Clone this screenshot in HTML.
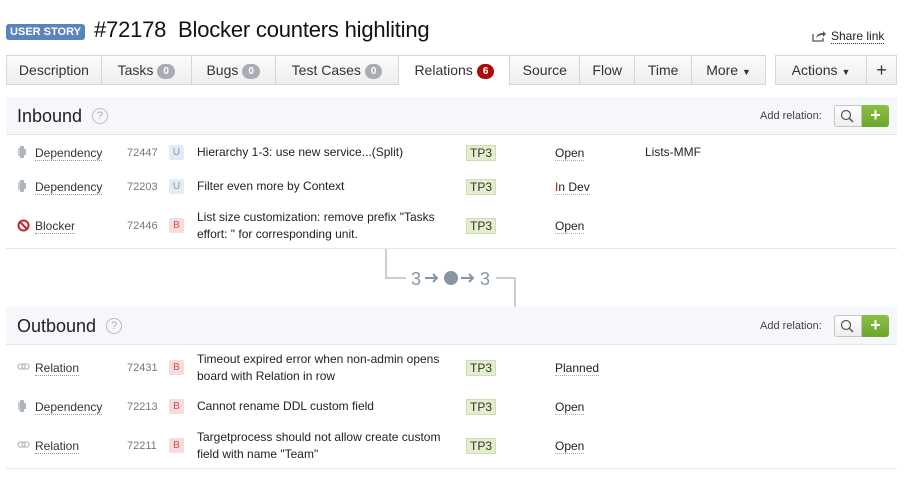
<!DOCTYPE html>
<html><head><meta charset="utf-8"><style>
*{box-sizing:border-box;margin:0;padding:0}
body{width:905px;height:487px;background:#fff;font-family:"Liberation Sans",sans-serif;color:#222;position:relative;overflow:hidden}
.a{position:absolute;white-space:nowrap}
.us{left:6px;top:24px;width:79px;height:16px;background:#5b84bd;border-radius:3px;color:#fff;font-size:11px;font-weight:bold;text-align:center;line-height:16px}
.title{left:94px;top:17px;font-size:22px;color:#111;letter-spacing:-0.2px}
.share{left:831px;top:30px;font-size:12px;color:#222;border-bottom:1px dotted #333;line-height:13px}
.tabs{left:6px;top:55px;height:30px;width:760px;border:1px solid #d6d6d6;background:linear-gradient(#fbfbfb,#eeeeee);display:flex}
.tab{height:28px;border-right:1px solid #d6d6d6;font-size:14px;color:#333;line-height:28px;text-align:center}
.tab.act{background:#fff;height:30px}
.cnt{display:inline-block;background:#a7adb5;color:#fff;border-radius:9px;font-size:10px;font-weight:bold;padding:0 6px;line-height:15px;vertical-align:1px;margin-left:4px}
.cnt.r{background:#a80d0d}
.btn{top:55px;height:30px;border:1px solid #d6d6d6;background:linear-gradient(#fbfbfb,#eeeeee);font-size:14px;color:#333;line-height:28px;text-align:center}
.panel{left:6px;width:891px;height:38px;background:#f6f7fa;border-bottom:1px solid #e3e5e8}
.ph{left:17px;font-size:18px;color:#222}
.q{display:inline-block;width:16px;height:16px;border:1px solid #bbb;border-radius:50%;color:#aaa;font-size:11px;text-align:center;line-height:14px;vertical-align:3px;margin-left:10px}
.addr{font-size:11px;color:#444}
.sb{width:28px;height:22px;border:1px solid #c6c6c6;border-radius:3px 0 0 3px;background:linear-gradient(#fff,#eee)}
.pb{width:27px;height:22px;border-radius:0 3px 3px 0;background:linear-gradient(#8cc044,#6ba62e);color:#fff;font-size:18px;font-weight:bold;text-align:center;line-height:21px}
.t{font-size:12px;color:#333;border-bottom:1px dotted #999;line-height:14px}
.id{font-size:11px;color:#777}
.bd{width:15px;height:15px;border-radius:2px;font-size:10px;text-align:center;line-height:15px}
.bu{background:#e5ebf5;color:#7d93c5}.bb{background:#f6dcdc;color:#d05050}
.tx{font-size:12px;color:#222;line-height:17px}
.tp{width:30px;height:16px;background:#e3eecd;border:1px solid #cfdcb5;font-size:12px;color:#333;text-align:center;line-height:14px}
.st{font-size:12px;color:#222;border-bottom:1px dotted #aaa;line-height:14px}
.hl{left:6px;width:891px;height:1px;background:#e3e5e8}
.ln{background:#c9cfd6}
</style></head><body>
<div class="a us">USER STORY</div>
<div class="a title">#72178&nbsp; Blocker counters highliting</div>
<svg class="a" style="left:812px;top:30px" width="14" height="12" viewBox="0 0 14 12"><path d="M1 4v7h10v-3" fill="none" stroke="#555" stroke-width="1.3"/><path d="M4 8c1-4 4-5 7-5V1l3 3-3 3V5c-3 0-5 1-7 3z" fill="#555"/></svg>
<div class="a share">Share link</div>
<div class="a tabs">
<div class="tab" style="width:95px">Description</div>
<div class="tab" style="width:90px">Tasks<span class="cnt">0</span></div>
<div class="tab" style="width:84px">Bugs<span class="cnt">0</span></div>
<div class="tab" style="width:124px">Test Cases<span class="cnt">0</span></div>
<div class="tab act" style="width:111px">Relations<span class="cnt r">6</span></div>
<div class="tab" style="width:70px">Source</div>
<div class="tab" style="width:55px">Flow</div>
<div class="tab" style="width:57px">Time</div>
<div class="tab" style="width:73px;border-right:0">More <span style="font-size:9px">▼</span></div>
</div>
<div class="a btn" style="left:775px;width:92px">Actions <span style="font-size:9px">▼</span></div>
<div class="a btn" style="left:866px;width:31px;font-size:18px">+</div>

<div class="a panel" style="top:97px"></div>
<div class="a ph" style="top:106px">Inbound<span class="q">?</span></div>
<div class="a addr" style="left:760px;top:110px">Add relation:</div>
<div class="a sb" style="left:834px;top:105px"><svg width="26" height="20"><circle cx="11" cy="9" r="4.5" fill="none" stroke="#555" stroke-width="1.2"/><path d="M14 12l4 4" stroke="#555" stroke-width="1.5"/></svg></div>
<div class="a pb" style="left:862px;top:105px">+</div>

<svg class="a" style="left:17px;top:145px" width="10" height="14"><path d="M3 1h4v3h2v6H7v3H3V1z" fill="#b0b6bd"/><path d="M1 3h2v8H1z" fill="#c8cdd2"/></svg>
<div class="a t" style="left:35px;top:146px">Dependency</div>
<div class="a id" style="left:127px;top:147px">72447</div>
<div class="a bd bu" style="left:169px;top:145px">U</div>
<div class="a tx" style="left:197px;top:144px">Hierarchy 1-3: use new service...(Split)</div>
<div class="a tp" style="left:466px;top:145px">TP3</div>
<div class="a st" style="left:555px;top:146px">Open</div>
<div class="a tx" style="left:645px;top:144px">Lists-MMF</div>

<svg class="a" style="left:17px;top:179px" width="10" height="14"><path d="M3 1h4v3h2v6H7v3H3V1z" fill="#b0b6bd"/><path d="M1 3h2v8H1z" fill="#c8cdd2"/></svg>
<div class="a t" style="left:35px;top:180px">Dependency</div>
<div class="a id" style="left:127px;top:181px">72203</div>
<div class="a bd bu" style="left:169px;top:179px">U</div>
<div class="a tx" style="left:197px;top:178px">Filter even more by Context</div>
<div class="a tp" style="left:466px;top:179px">TP3</div>
<div class="a st" style="left:555px;top:180px"><span style="color:#8a2a00">I</span>n Dev</div>

<svg class="a" style="left:17px;top:219px" width="13" height="13"><circle cx="6.5" cy="6.5" r="5" fill="none" stroke="#c0282b" stroke-width="2"/><path d="M3 3l7 7" stroke="#c0282b" stroke-width="2"/></svg>
<div class="a t" style="left:35px;top:219px">Blocker</div>
<div class="a id" style="left:127px;top:220px">72446</div>
<div class="a bd bb" style="left:169px;top:218px">B</div>
<div class="a tx" style="left:197px;top:209px">List size customization: remove prefix "Tasks<br>effort: " for corresponding unit.</div>
<div class="a tp" style="left:466px;top:218px">TP3</div>
<div class="a st" style="left:555px;top:219px">Open</div>

<div class="a hl" style="top:248px"></div>
<div class="a ln" style="left:385px;top:249px;width:2px;height:30px"></div>
<div class="a ln" style="left:385px;top:277px;width:21px;height:2px"></div>
<svg class="a" style="left:408px;top:266px" width="88" height="24"><text x="3" y="19" font-family="Liberation Sans" font-size="18" fill="#8794a3">3</text><path d="M17 12h12M25 8l4 4-4 4" stroke="#8794a3" stroke-width="2" fill="none"/><circle cx="43" cy="12" r="7" fill="#8794a3"/><path d="M53 12h12M61 8l4 4-4 4" stroke="#8794a3" stroke-width="2" fill="none"/><text x="72" y="19" font-family="Liberation Sans" font-size="18" fill="#8794a3">3</text></svg>
<div class="a ln" style="left:496px;top:277px;width:20px;height:2px"></div>
<div class="a ln" style="left:514px;top:277px;width:2px;height:30px"></div>

<div class="a panel" style="top:307px"></div>
<div class="a ph" style="top:316px">Outbound<span class="q">?</span></div>
<div class="a addr" style="left:760px;top:320px">Add relation:</div>
<div class="a sb" style="left:834px;top:315px"><svg width="26" height="20"><circle cx="11" cy="9" r="4.5" fill="none" stroke="#555" stroke-width="1.2"/><path d="M14 12l4 4" stroke="#555" stroke-width="1.5"/></svg></div>
<div class="a pb" style="left:862px;top:315px">+</div>

<svg class="a" style="left:17px;top:363px" width="13" height="8"><rect x="1" y="1" width="7" height="5" rx="2.5" fill="none" stroke="#b8bec4" stroke-width="1.3"/><rect x="5" y="1" width="7" height="5" rx="2.5" fill="none" stroke="#b8bec4" stroke-width="1.3"/></svg>
<div class="a t" style="left:35px;top:361px">Relation</div>
<div class="a id" style="left:127px;top:362px">72431</div>
<div class="a bd bb" style="left:169px;top:360px">B</div>
<div class="a tx" style="left:197px;top:351px">Timeout expired error when non-admin opens<br>board with Relation in row</div>
<div class="a tp" style="left:466px;top:360px">TP3</div>
<div class="a st" style="left:555px;top:361px">Planned</div>

<svg class="a" style="left:17px;top:399px" width="10" height="14"><path d="M3 1h4v3h2v6H7v3H3V1z" fill="#b0b6bd"/><path d="M1 3h2v8H1z" fill="#c8cdd2"/></svg>
<div class="a t" style="left:35px;top:400px">Dependency</div>
<div class="a id" style="left:127px;top:401px">72213</div>
<div class="a bd bb" style="left:169px;top:399px">B</div>
<div class="a tx" style="left:197px;top:398px">Cannot rename DDL custom field</div>
<div class="a tp" style="left:466px;top:399px">TP3</div>
<div class="a st" style="left:555px;top:400px">Open</div>

<svg class="a" style="left:17px;top:441px" width="13" height="8"><rect x="1" y="1" width="7" height="5" rx="2.5" fill="none" stroke="#b8bec4" stroke-width="1.3"/><rect x="5" y="1" width="7" height="5" rx="2.5" fill="none" stroke="#b8bec4" stroke-width="1.3"/></svg>
<div class="a t" style="left:35px;top:439px">Relation</div>
<div class="a id" style="left:127px;top:440px">72211</div>
<div class="a bd bb" style="left:169px;top:438px">B</div>
<div class="a tx" style="left:197px;top:429px">Targetprocess should not allow create custom<br>field with name "Team"</div>
<div class="a tp" style="left:466px;top:438px">TP3</div>
<div class="a st" style="left:555px;top:439px">Open</div>

<div class="a hl" style="top:468px"></div>
</body></html>
